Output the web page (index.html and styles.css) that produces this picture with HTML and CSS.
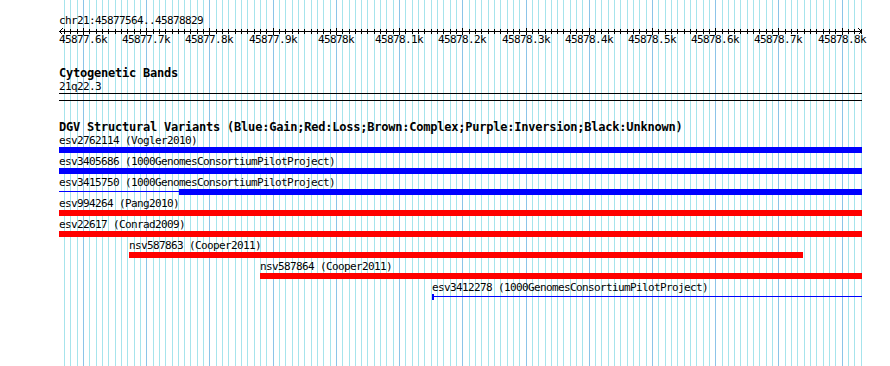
FILE: index.html
```html
<!DOCTYPE html>
<html lang="en">
<head>
  <meta charset="UTF-8" />
  <title>chr21:45877564..45878829</title>
  <link rel="stylesheet" href="styles.css">
</head>
<body>
  <div class="browser">
    <div class="grid" id="grid"></div>

    <div class="canvas">
      <!-- ruler -->
      <div class="label">chr21:45877564..45878829</div>
      <svg class="axis" id="axis" width="803" height="7" shape-rendering="crispEdges">
        <rect x="0" y="4" width="803" height="1" fill="#000"/>
        <path d="M0.5 4.5 L3.5 1.5 M0.5 4.5 L3.5 7.5 M802.5 4.5 L799.5 1.5 M802.5 4.5 L799.5 7.5" stroke="#000" stroke-width="1" fill="none"/>
      </svg>
      <div class="ticks">
        <span class="label tick" style="left:24px">45877.6k</span>
        <span class="label tick" style="left:87px">45877.7k</span>
        <span class="label tick" style="left:150px">45877.8k</span>
        <span class="label tick" style="left:214px">45877.9k</span>
        <span class="label tick" style="left:277px">45878k</span>
        <span class="label tick" style="left:340px">45878.1k</span>
        <span class="label tick" style="left:403px">45878.2k</span>
        <span class="label tick" style="left:467px">45878.3k</span>
        <span class="label tick" style="left:530px">45878.4k</span>
        <span class="label tick" style="left:593px">45878.5k</span>
        <span class="label tick" style="left:656px">45878.6k</span>
        <span class="label tick" style="left:719px">45878.7k</span>
        <span class="label tick" style="left:783px">45878.8k</span>
      </div>

      <!-- cytogenetic bands -->
      <div class="title cyto-title">Cytogenetic Bands</div>
      <div class="label band-name">21q22.3</div>
      <div class="band-lines"></div>

      <!-- DGV -->
      <div class="title dgv-title">DGV Structural Variants (Blue:Gain;Red:Loss;Brown:Complex;Purple:Inversion;Black:Unknown)</div>
      <div class="feats">
        <div class="feat">
          <div class="label">esv2762114 (Vogler2010)</div>
          <div class="bar"><span class="thick blue" style="width:803px"></span></div>
        </div>
        <div class="feat">
          <div class="label">esv3405686 (1000GenomesConsortiumPilotProject)</div>
          <div class="bar"><span class="thick blue" style="width:803px"></span></div>
        </div>
        <div class="feat">
          <div class="label">esv3415750 (1000GenomesConsortiumPilotProject)</div>
          <div class="bar"><span class="thin blue" style="width:120px"></span><span class="thick blue" style="width:683px"></span></div>
        </div>
        <div class="feat">
          <div class="label">esv994264 (Pang2010)</div>
          <div class="bar"><span class="thick red" style="width:803px"></span></div>
        </div>
        <div class="feat">
          <div class="label">esv22617 (Conrad2009)</div>
          <div class="bar"><span class="thick red" style="width:803px"></span></div>
        </div>
        <div class="feat" style="margin-left:70px">
          <div class="label">nsv587863 (Cooper2011)</div>
          <div class="bar"><span class="thick red" style="width:674px"></span></div>
        </div>
        <div class="feat" style="margin-left:201px">
          <div class="label">nsv587864 (Cooper2011)</div>
          <div class="bar"><span class="thick red" style="width:602px"></span></div>
        </div>
        <div class="feat" style="margin-left:373px">
          <div class="label">esv3412278 (1000GenomesConsortiumPilotProject)</div>
          <div class="bar"><span class="thick blue" style="width:2px"></span><span class="thin blue" style="width:428px"></span></div>
        </div>
      </div>
    </div>
  </div>

  <script>
    // grid lines + ruler ticks every 10bp, major every 100bp
    const grid = document.getElementById("grid");
    const axis = document.getElementById("axis");
    const svgNS = "http://www.w3.org/2000/svg";
    const left = 59;

    for (let k = -3; k <= 123; k++) {
      const x = Math.round(83 + k * 6.322);
      const major = k % 10 === 0;

      const line = document.createElement("div");
      line.className = major ? "gridline major" : "gridline";
      line.style.left = x + "px";
      grid.appendChild(line);

      const tick = document.createElementNS(svgNS, "rect");
      tick.setAttribute("x", x - left);
      tick.setAttribute("y", major ? 1 : 2);
      tick.setAttribute("width", 1);
      tick.setAttribute("height", major ? 7 : 5);
      tick.setAttribute("fill", "#000");
      axis.appendChild(tick);
    }
  </script>
</body>
</html>
```

FILE: styles.css
```css
body {
  margin: 0;
  background: #fff;
  color: #000;
  font-family: "DejaVu Sans Mono", "Liberation Mono", monospace;
}

.browser {
  position: relative;
  width: 890px;
  height: 366px;
  overflow: hidden;
}

/* GRID */
.grid {
  position: absolute;
  top: 0;
  left: 0;
  width: 100%;
  height: 100%;
}

.gridline {
  position: absolute;
  top: 0;
  bottom: 0;
  width: 1px;
  background: #a6e4ec;
}

.gridline.major {
  background: #8cc4e8;
}

/* TRACKS */
.canvas {
  position: relative;
  margin-left: 59px;
  width: 803px;
  padding-top: 15px;
}

.label {
  font-size: 11px;
  letter-spacing: -0.62px;
  line-height: 12px;
  height: 12px;
  white-space: nowrap;
}

.title {
  font-weight: bold;
  font-size: 12px;
  letter-spacing: -0.22px;
  line-height: 13px;
  height: 13px;
  white-space: nowrap;
}

.axis {
  display: block;
  position: relative;
  overflow: visible;
}

.ticks {
  position: relative;
  height: 13px;
}

.tick {
  position: absolute;
  top: 0;
  transform: translateX(-50%);
}

.cyto-title {
  margin-top: 20px;
}

.band-name {
  position: relative;
  margin-top: 1px;
}

.band-lines {
  position: relative;
  height: 6px;
  border-top: 1px solid #000;
  border-bottom: 1px solid #000;
}

.dgv-title {
  position: relative;
  margin-top: 20px;
}

.feats {
  position: relative;
  margin-top: 1px;
}

.feat {
  height: 21px;
}

.bar {
  display: flex;
  height: 6px;
}

.thick {
  height: 6px;
}

.thin {
  height: 1px;
  margin-top: 2px;
}

.blue {
  background: #0000ff;
}

.red {
  background: #ff0000;
}
```
